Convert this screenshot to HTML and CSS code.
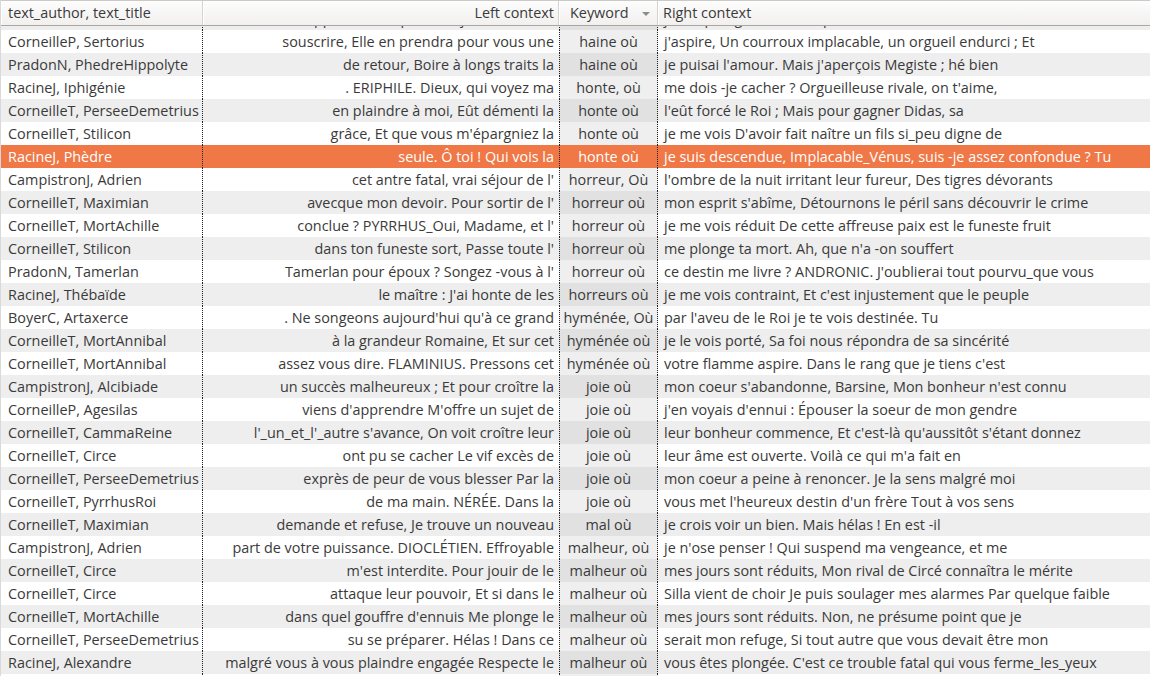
FILE: index.html
```html
<!DOCTYPE html>
<html>
<head>
<meta charset="utf-8">
<link rel="stylesheet" href="styles.css">
</head>
<body>
<div class="view">
  <div class="header">
    <div class="hcell c1">text_author, text_title</div>
    <div class="hcell c2 right">Left context</div>
    <div class="hcell c3 kw">Keyword<span class="arrow"></span></div>
    <div class="hcell c4">Right context</div>
  </div>
  <div class="body">
    <div class="rows">
      <div class="row odd"><div class="cell c1">CorneilleT, Stilicon</div><div class="cell c2"><span>appuis de ma perte, et je suis dans la</span></div><div class="cell c3">haine où</div><div class="cell c4">je me plonge, Un tel emportement</div></div>
      <div class="row"><div class="cell c1">CorneilleP, Sertorius</div><div class="cell c2"><span>souscrire, Elle en prendra pour vous une</span></div><div class="cell c3">haine où</div><div class="cell c4">j'aspire, Un courroux implacable, un orgueil endurci ; Et</div></div>
      <div class="row odd"><div class="cell c1">PradonN, PhedreHippolyte</div><div class="cell c2"><span>de retour, Boire à longs traits la</span></div><div class="cell c3">haine où</div><div class="cell c4">je puisai l'amour. Mais j'aperçois Megiste ; hé bien</div></div>
      <div class="row"><div class="cell c1">RacineJ, Iphigénie</div><div class="cell c2"><span>. ERIPHILE. Dieux, qui voyez ma</span></div><div class="cell c3">honte, où</div><div class="cell c4">me dois -je cacher ? Orgueilleuse rivale, on t'aime,</div></div>
      <div class="row odd"><div class="cell c1">CorneilleT, PerseeDemetrius</div><div class="cell c2"><span>en plaindre à moi, Eût démenti la</span></div><div class="cell c3">honte où</div><div class="cell c4">l'eût forcé le Roi ; Mais pour gagner Didas, sa</div></div>
      <div class="row"><div class="cell c1">CorneilleT, Stilicon</div><div class="cell c2"><span>grâce, Et que vous m'épargniez la</span></div><div class="cell c3">honte où</div><div class="cell c4">je me vois D'avoir fait naître un fils si_peu digne de</div></div>
      <div class="row selected"><div class="cell c1">RacineJ, Phèdre</div><div class="cell c2"><span>seule. Ô toi ! Qui vois la</span></div><div class="cell c3">honte où</div><div class="cell c4">je suis descendue, Implacable_Vénus, suis -je assez confondue ? Tu</div></div>
      <div class="row"><div class="cell c1">CampistronJ, Adrien</div><div class="cell c2"><span>cet antre fatal, vrai séjour de l'</span></div><div class="cell c3">horreur, Où</div><div class="cell c4">l'ombre de la nuit irritant leur fureur, Des tigres dévorants</div></div>
      <div class="row odd"><div class="cell c1">CorneilleT, Maximian</div><div class="cell c2"><span>avecque mon devoir. Pour sortir de l'</span></div><div class="cell c3">horreur où</div><div class="cell c4">mon esprit s'abîme, Détournons le péril sans découvrir le crime</div></div>
      <div class="row"><div class="cell c1">CorneilleT, MortAchille</div><div class="cell c2"><span>conclue ? PYRRHUS_Oui, Madame, et l'</span></div><div class="cell c3">horreur où</div><div class="cell c4">je me vois réduit De cette affreuse paix est le funeste fruit</div></div>
      <div class="row odd"><div class="cell c1">CorneilleT, Stilicon</div><div class="cell c2"><span>dans ton funeste sort, Passe toute l'</span></div><div class="cell c3">horreur où</div><div class="cell c4">me plonge ta mort. Ah, que n'a -on souffert</div></div>
      <div class="row"><div class="cell c1">PradonN, Tamerlan</div><div class="cell c2"><span>Tamerlan pour époux ? Songez -vous à l'</span></div><div class="cell c3">horreur où</div><div class="cell c4">ce destin me livre ? ANDRONIC. J'oublierai tout pourvu_que vous</div></div>
      <div class="row odd"><div class="cell c1">RacineJ, Thébaïde</div><div class="cell c2"><span>le maître : J'ai honte de les</span></div><div class="cell c3">horreurs où</div><div class="cell c4">je me vois contraint, Et c'est injustement que le peuple</div></div>
      <div class="row"><div class="cell c1">BoyerC, Artaxerce</div><div class="cell c2"><span>. Ne songeons aujourd'hui qu'à ce grand</span></div><div class="cell c3">hyménée, Où</div><div class="cell c4">par l'aveu de le Roi je te vois destinée. Tu</div></div>
      <div class="row odd"><div class="cell c1">CorneilleT, MortAnnibal</div><div class="cell c2"><span>à la grandeur Romaine, Et sur cet</span></div><div class="cell c3">hyménée où</div><div class="cell c4">je le vois porté, Sa foi nous répondra de sa sincérité</div></div>
      <div class="row"><div class="cell c1">CorneilleT, MortAnnibal</div><div class="cell c2"><span>assez vous dire. FLAMINIUS. Pressons cet</span></div><div class="cell c3">hyménée où</div><div class="cell c4">votre flamme aspire. Dans le rang que je tiens c'est</div></div>
      <div class="row odd"><div class="cell c1">CampistronJ, Alcibiade</div><div class="cell c2"><span>un succès malheureux ; Et pour croître la</span></div><div class="cell c3">joie où</div><div class="cell c4">mon coeur s'abandonne, Barsine, Mon bonheur n'est connu</div></div>
      <div class="row"><div class="cell c1">CorneilleP, Agesilas</div><div class="cell c2"><span>viens d'apprendre M'offre un sujet de</span></div><div class="cell c3">joie où</div><div class="cell c4">j'en voyais d'ennui : Épouser la soeur de mon gendre</div></div>
      <div class="row odd"><div class="cell c1">CorneilleT, CammaReine</div><div class="cell c2"><span>l'_un_et_l'_autre s'avance, On voit croître leur</span></div><div class="cell c3">joie où</div><div class="cell c4">leur bonheur commence, Et c'est-là qu'aussitôt s'étant donnez</div></div>
      <div class="row"><div class="cell c1">CorneilleT, Circe</div><div class="cell c2"><span>ont pu se cacher Le vif excès de</span></div><div class="cell c3">joie où</div><div class="cell c4">leur âme est ouverte. Voilà ce qui m'a fait en</div></div>
      <div class="row odd"><div class="cell c1">CorneilleT, PerseeDemetrius</div><div class="cell c2"><span>exprès de peur de vous blesser Par la</span></div><div class="cell c3">joie où</div><div class="cell c4">mon coeur a peine à renoncer. Je la sens malgré moi</div></div>
      <div class="row"><div class="cell c1">CorneilleT, PyrrhusRoi</div><div class="cell c2"><span>de ma main. NÉRÉE. Dans la</span></div><div class="cell c3">joie où</div><div class="cell c4">vous met l'heureux destin d'un frère Tout à vos sens</div></div>
      <div class="row odd"><div class="cell c1">CorneilleT, Maximian</div><div class="cell c2"><span>demande et refuse, Je trouve un nouveau</span></div><div class="cell c3">mal où</div><div class="cell c4">je crois voir un bien. Mais hélas ! En est -il</div></div>
      <div class="row"><div class="cell c1">CampistronJ, Adrien</div><div class="cell c2"><span>part de votre puissance. DIOCLÉTIEN. Effroyable</span></div><div class="cell c3">malheur, où</div><div class="cell c4">je n'ose penser ! Qui suspend ma vengeance, et me</div></div>
      <div class="row odd"><div class="cell c1">CorneilleT, Circe</div><div class="cell c2"><span>m'est interdite. Pour jouir de le</span></div><div class="cell c3">malheur où</div><div class="cell c4">mes jours sont réduits, Mon rival de Circé connaîtra le mérite</div></div>
      <div class="row"><div class="cell c1">CorneilleT, Circe</div><div class="cell c2"><span>attaque leur pouvoir, Et si dans le</span></div><div class="cell c3">malheur où</div><div class="cell c4">Silla vient de choir Je puis soulager mes alarmes Par quelque faible</div></div>
      <div class="row odd"><div class="cell c1">CorneilleT, MortAchille</div><div class="cell c2"><span>dans quel gouffre d'ennuis Me plonge le</span></div><div class="cell c3">malheur où</div><div class="cell c4">mes jours sont réduits. Non, ne présume point que je</div></div>
      <div class="row"><div class="cell c1">CorneilleT, PerseeDemetrius</div><div class="cell c2"><span>su se préparer. Hélas ! Dans ce</span></div><div class="cell c3">malheur où</div><div class="cell c4">serait mon refuge, Si tout autre que vous devait être mon</div></div>
      <div class="row odd"><div class="cell c1">RacineJ, Alexandre</div><div class="cell c2"><span>malgré vous à vous plaindre engagée Respecte le</span></div><div class="cell c3">malheur où</div><div class="cell c4">vous êtes plongée. C'est ce trouble fatal qui vous ferme_les_yeux</div></div>
      <div class="row"><div class="cell c1">RacineJ, Alexandre</div><div class="cell c2"><span>vous à vous plaindre</span></div><div class="cell c3">malheur où</div><div class="cell c4">vous êtes</div></div>
    </div>
  </div>
</div>
</body>
</html>
```

FILE: styles.css
```css
* { box-sizing: border-box; }
html, body {
  margin: 0;
  padding: 0;
  background: #ffffff;
}
body {
  font-family: "Open Sans", "Noto Sans", "DejaVu Sans", sans-serif;
  font-size: 14.4px;
  color: #3a3a3a;
  width: 1150px;
  height: 676px;
  overflow: hidden;
}
.view {
  display: flex;
  flex-direction: column;
  height: 676px;
  border-left: 1px solid #d9d9d9;
}
.header {
  display: grid;
  grid-template-columns: 202px 356px 99px 1fr;
  height: 26px;
  border-top: 1px solid #cdc9c5;
  border-bottom: 1px solid #aaa6a2;
  background: linear-gradient(#fdfdfd, #f1f0ef);
  flex: none;
}
.hcell {
  display: flex;
  align-items: center;
  padding: 0 6px 1px 7px;
  border-right: 1px solid #d6d3cf;
  box-shadow: inset 1px 0 0 #ffffff;
  white-space: nowrap;
  overflow: hidden;
}
.hcell.c4 { border-right: none; padding-left: 5px; }
.hcell.right { justify-content: flex-end; padding-right: 4px; }
.hcell.kw { padding-left: 11px; }
.arrow {
  margin-left: 13px;
  margin-top: 2px;
  width: 0;
  height: 0;
  border-left: 4px solid transparent;
  border-right: 4px solid transparent;
  border-top: 4px solid #8c8c8c;
}
.body {
  flex: 1;
  overflow: hidden;
}
.rows {
  margin-top: -19px;
}
.row {
  display: grid;
  grid-template-columns: 202px 356px 99px 1fr;
  height: 23px;
  background: #ffffff;
}
.row.odd { background: #eeeeee; }
.cell {
  display: flex;
  align-items: center;
  white-space: nowrap;
  overflow: hidden;
  padding-bottom: 1px;
}
.cell.c1 {
  padding-left: 7px;
  border-right: 1px dotted #222;
}
.cell.c2 {
  justify-content: flex-end;
  padding-right: 5px;
}
.cell.c2 span { flex: none; }
.cell.c3 {
  justify-content: center;
  background: #efefef;
  border-left: 1px dotted #222;
  border-right: 1px dotted #222;
}
.row.odd .cell.c3 { background: #e1e1e1; }
.cell.c4 { padding-left: 6px; }
.row.selected { background: #f07746; color: #ffffff; }
.row.selected .cell.c3 { background: #f07746; }
```
